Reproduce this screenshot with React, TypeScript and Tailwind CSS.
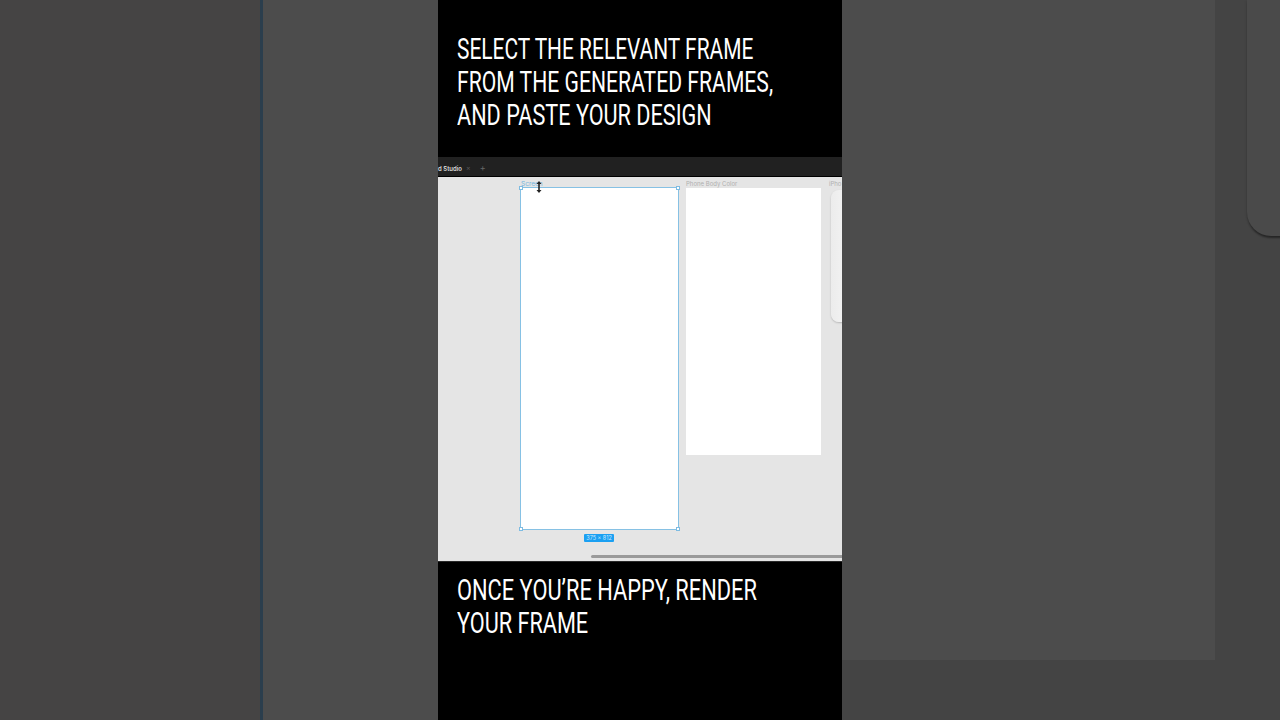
const headline = "w-max origin-left whitespace-nowrap font-normal";

export default function App() {
  return (
    <div className="flex h-[720px] w-[1280px] overflow-hidden bg-[#444444]">
      {/* Left of the video: blurred backdrop */}
      <div className="flex w-[438px] shrink-0">
        <div className="w-[260px] bg-[#454444]" />
        <div className="w-[3px] bg-[#2b3e4d]" />
        <div className="flex-1 bg-[#4c4c4c]" />
      </div>

      {/* Video column */}
      <div className="flex w-[404px] shrink-0 flex-col bg-black font-['Roboto',sans-serif] text-white">
        <div className="h-[157px] shrink-0 pl-[19px] pt-[33px] text-[29.5px] leading-[33px]">
          <p className={`${headline} scale-x-[0.709]`}>SELECT THE RELEVANT FRAME</p>
          <p className={`${headline} scale-x-[0.717]`}>FROM THE GENERATED FRAMES,</p>
          <p className={`${headline} scale-x-[0.734]`}>AND PASTE YOUR DESIGN</p>
        </div>

        {/* Tab bar */}
        <div className="flex h-[20px] shrink-0 items-center border-b border-black bg-[#212121] pt-[2px] font-['Inter',sans-serif] leading-none">
          <span className="mt-[2px] w-[23px] whitespace-nowrap text-right text-[6px] font-semibold text-[#dcdcdc]">d Studio</span>
          <span className="ml-[5px] text-[7px] text-[#555555]">×</span>
          <span className="ml-[9px] text-[9px] text-[#666666]">+</span>
        </div>

        {/* Canvas */}
        <div className="relative h-[385px] shrink-0 overflow-hidden border-b border-[#2a2a2a] bg-[#e5e5e5] font-['Inter',sans-serif]">
          <span className="absolute left-[83px] top-[3px] text-[6.5px] leading-[8px] text-[#74b4dd]">Screen</span>
          <span className="absolute left-[248px] top-[3px] text-[6px] leading-[8px] text-[#b0b0b0]">Phone Body Color</span>
          <span className="absolute left-[391px] top-[3px] text-[6px] leading-[8px] text-[#b0b0b0]">iPho</span>

          {/* Selected frame */}
          <div className="absolute left-[82px] top-[10px] h-[343px] w-[159px] border border-[#86c1e4] bg-white" />
          <div className="absolute left-[81px] top-[9px] size-[4px] border border-[#7fbce2] bg-white" />
          <div className="absolute left-[238px] top-[9px] size-[4px] border border-[#7fbce2] bg-white" />
          <div className="absolute left-[81px] top-[350px] size-[4px] border border-[#7fbce2] bg-white" />
          <div className="absolute left-[238px] top-[350px] size-[4px] border border-[#7fbce2] bg-white" />

          {/* Resize cursor */}
          <svg className="absolute left-[98px] top-[4px]" width="6" height="12" viewBox="0 0 6 12">
            <path d="M3 0 5.5 3H3.8V9H5.5L3 12 .5 9H2.2V3H.5Z" fill="#222222" />
          </svg>

          <div className="absolute left-[146px] top-[357px] flex h-[8px] w-[30px] items-center justify-center rounded-[1px] bg-[#1ba0f2] pt-px text-[5.5px] leading-none text-[#cdeaff]">
            375 × 812
          </div>

          {/* Second frame */}
          <div className="absolute left-[248px] top-[11px] h-[267px] w-[135px] bg-white" />

          {/* Phone mockup, cut off by the video edge */}
          <div className="absolute left-[393px] top-[13px] h-[132px] w-[30px] rounded-[8px] bg-gradient-to-r from-[#ececec] to-[#fafafa] shadow-[0_1px_2px_rgba(0,0,0,0.2)]" />

          <div className="absolute left-[153px] top-[378px] h-[3px] w-[260px] rounded-full bg-[#9a9a9a]" />
        </div>

        <div className="flex-1 pl-[19px] pt-[12px] text-[29.5px] leading-[33px]">
          <p className={`${headline} scale-x-[0.74]`}>ONCE YOU’RE HAPPY, RENDER</p>
          <p className={`${headline} scale-x-[0.735]`}>YOUR FRAME</p>
        </div>
      </div>

      {/* Right of the video: blurred backdrop */}
      <div className="flex min-w-0 flex-1 items-start">
        <div className="h-[660px] w-[373px] shrink-0 bg-[#4c4c4c]" />
        <div className="ml-[32px] h-[236px] w-[60px] shrink-0 rounded-bl-[24px] bg-[#4a4a4a] shadow-[-1px_1px_2px_rgba(0,0,0,0.1),0_3px_2px_-1px_rgba(0,0,0,0.4)]" />
      </div>
    </div>
  );
}
